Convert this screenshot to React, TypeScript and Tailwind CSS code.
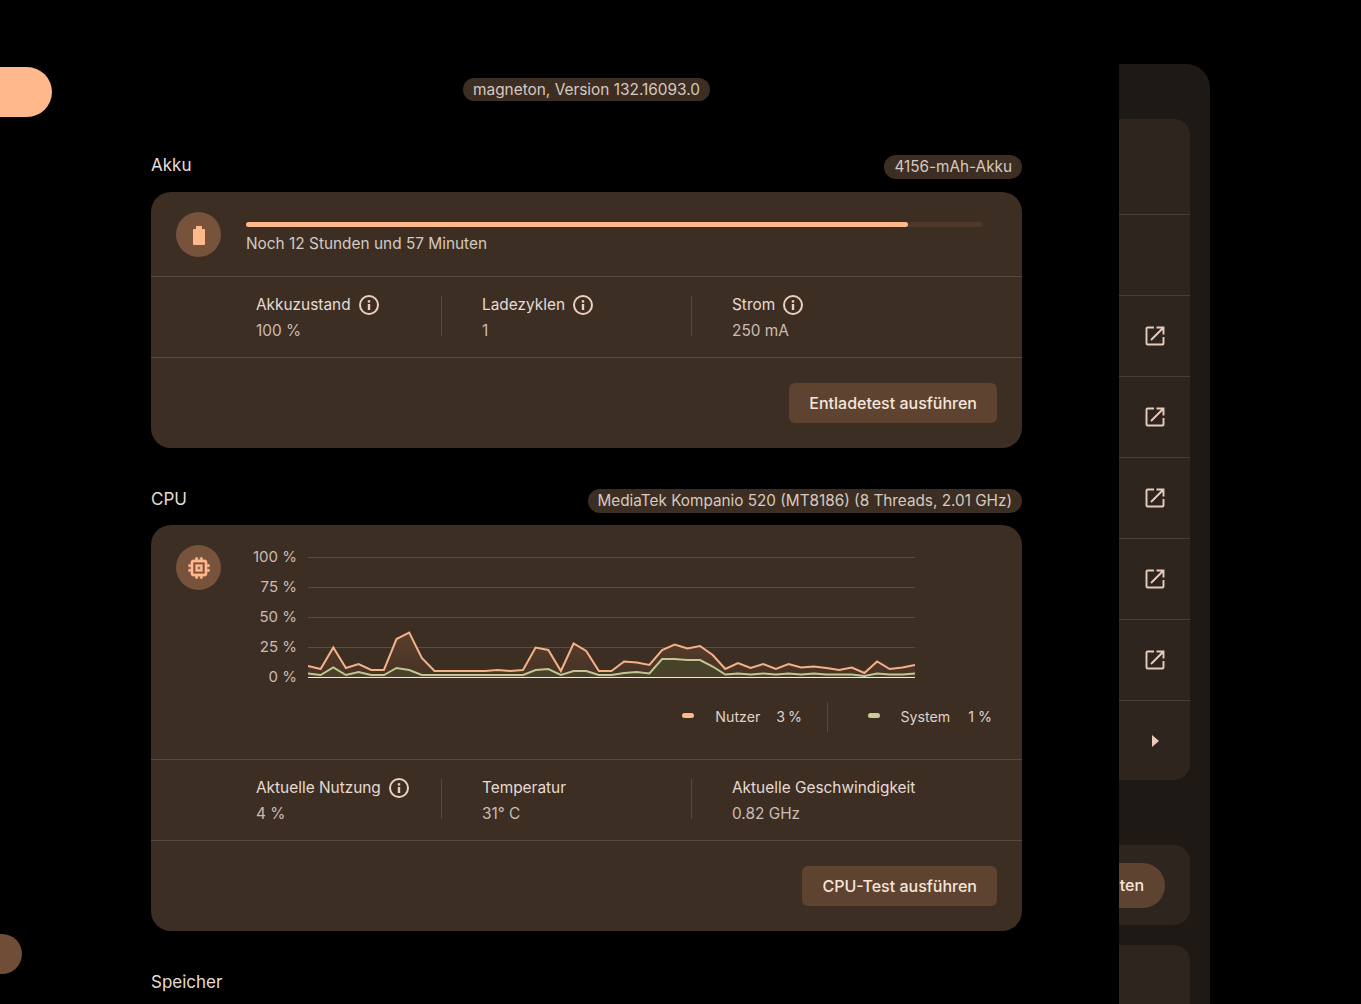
const userLoad = [
  666, 669, 647.5, 668, 664, 670, 670, 639, 632.5, 658, 671, 671, 671, 671, 671, 670, 671, 670, 647.5,
  650, 671, 643.5, 651, 671, 671, 661.5, 662.5, 665, 650, 644.5, 648.5, 646, 655, 669, 663, 668, 664, 669,
  664, 667.5, 666.5, 668, 670, 667.5, 673, 661.5, 669, 667.5, 665,
];
const systemLoad = [
  673.5, 675, 667.5, 675, 672, 675, 675, 668, 670, 675, 675, 675, 675, 675, 675, 675, 675, 675, 670,
  669, 675, 671, 671, 675, 675, 673, 672, 673.5, 659, 659, 660, 660, 666.5, 674.5, 673.5, 674.5, 673.5,
  674.5, 673.5, 674.5, 673.5, 674.5, 674.5, 674.5, 676, 673.5, 674.5, 674.5, 673.5,
];

const stepX = 607 / 48;
const toPoints = (values: number[]) =>
  values.map((y, i) => `${(i * stepX).toFixed(1)},${y - 557}`).join(" ");
const toArea = (values: number[]) => `0,120 ${toPoints(values)} 607,120`;

function InfoIcon() {
  return (
    <svg width="22" height="22" viewBox="0 0 22 22" fill="none" className="shrink-0">
      <circle cx="11" cy="11" r="9" stroke="#eccfbc" strokeWidth="2" />
      <rect x="9.8" y="10" width="2.4" height="6" fill="#eccfbc" />
      <rect x="9.8" y="6.2" width="2.4" height="2.4" fill="#eccfbc" />
    </svg>
  );
}

function OpenIcon() {
  return (
    <svg width="22" height="22" viewBox="0 0 22 22" fill="none">
      <path d="M10 2.5H3.5a1 1 0 0 0-1 1v15a1 1 0 0 0 1 1h15a1 1 0 0 0 1-1V12" stroke="#e8ccba" strokeWidth="1.9" />
      <path d="M7 15 18.5 3.5M12.5 2.5h7v7" stroke="#e8ccba" strokeWidth="1.9" />
    </svg>
  );
}

function Stat({ label, value, info, className }: { label: string; value: string; info?: boolean; className: string }) {
  return (
    <div className={className}>
      <div className="-mt-[2px] flex items-center gap-[7px] h-[22px] text-[15.4px] text-[#e6dbd2]">
        {label}
        {info && <InfoIcon />}
      </div>
      <div className="mt-[3px] text-[15.4px] leading-6 text-[#c9bcb2]">{value}</div>
    </div>
  );
}

function StatRow({ stats }: { stats: { label: string; value: string; info?: boolean }[] }) {
  return (
    <div className="flex items-start h-[81px] pt-[19px] pl-[105px] border-t border-[#58493e]">
      <Stat {...stats[0]} className="w-[186px] h-10 border-r border-[#58493e]" />
      <Stat {...stats[1]} className="w-[250px] h-10 pl-10 border-r border-[#58493e]" />
      <Stat {...stats[2]} className="pl-10 h-10" />
    </div>
  );
}

function ActionRow({ label }: { label: string }) {
  return (
    <div className="flex justify-end h-[91px] pt-[25px] pr-[25px] border-t border-[#58493e]">
      <button className="h-10 px-5 rounded-md bg-[#5e4331] text-[16px] font-medium text-[#f6e6da]">{label}</button>
    </div>
  );
}

function Chip({ children }: { children: string }) {
  return (
    <span className="px-2.5 h-[24px] flex items-center rounded-full bg-[#3d2e24] text-[15.3px] text-[#d6c9bf]">
      {children}
    </span>
  );
}

function SectionHeader({ title, chip }: { title: string; chip: string }) {
  return (
    <div className="flex justify-between items-start">
      <h2 className="text-[17px] leading-5 text-[#e6dbd2]">{title}</h2>
      <Chip>{chip}</Chip>
    </div>
  );
}

function IconCircle({ children }: { children: React.ReactNode }) {
  return (
    <div className="w-[45px] h-[45px] shrink-0 rounded-full bg-[#77533c] flex items-center justify-center">
      {children}
    </div>
  );
}

function Legend({ color, name, value, valueClass }: { color: string; name: string; value: string; valueClass: string }) {
  return (
    <div className="flex items-center text-[14.2px] text-[#ddd1c8]">
      <span className={`w-3 h-[5px] rounded-full mr-[21px] -mt-[3px] ${color}`} />
      <span>{name}</span>
      <span className={valueClass}>{value}</span>
    </div>
  );
}

const chartLabels = ["100 %", "75 %", "50 %", "25 %", "0 %"];
const rowCards = [0, 1, 2, 3, 4];

export default function App() {
  return (
    <div className="flex h-[1004px] w-[1361px] overflow-hidden bg-black font-['Inter',sans-serif]">
      <nav className="w-[151px] shrink-0 flex flex-col justify-between pt-[67px] pb-[30px]">
        <div className="w-[52px] h-[50px] rounded-r-full bg-[#ffb88c]" />
        <div className="w-[22px] h-10 rounded-r-full bg-[#6f4d37]" />
      </nav>

      <main className="w-[871px] shrink-0 pt-[78px]">
        <div className="flex justify-center">
          <span className="px-2.5 h-[23px] flex items-center rounded-full bg-[#3d2e24] text-[15.4px] text-[#d6c9bf]">
            magneton, Version 132.16093.0
          </span>
        </div>

        <section className="mt-[54px]">
          <SectionHeader title="Akku" chip="4156-mAh-Akku" />
          <div className="mt-[13px] rounded-[20px] bg-[#3d2e24]">
            <div className="flex h-[84px] pl-[25px] pr-10 pt-5 gap-[25px]">
              <IconCircle>
                <svg width="12" height="19" viewBox="0 0 12 19" fill="#ffb88c" className="mt-0.5">
                  <path d="M3 0h6v3h2a1 1 0 0 1 1 1v14a1 1 0 0 1-1 1H1a1 1 0 0 1-1-1V4a1 1 0 0 1 1-1h2z" />
                </svg>
              </IconCircle>
              <div className="flex-1 pt-2.5">
                <div className="h-[5px] rounded-full bg-[#4e3829]">
                  <div className="h-full w-[90%] rounded-full bg-[#ffb88c]" />
                </div>
                <p className="mt-[5px] text-[15.4px] text-[#d6c9bf]">Noch 12 Stunden und 57 Minuten</p>
              </div>
            </div>
            <StatRow
              stats={[
                { label: "Akkuzustand", value: "100 %", info: true },
                { label: "Ladezyklen", value: "1", info: true },
                { label: "Strom", value: "250 mA", info: true },
              ]}
            />
            <ActionRow label="Entladetest ausführen" />
          </div>
        </section>

        <section className="mt-[41px]">
          <SectionHeader title="CPU" chip="MediaTek Kompanio 520 (MT8186) (8 Threads, 2.01 GHz)" />
          <div className="mt-3 rounded-[20px] bg-[#3d2e24]">
            <div className="h-[234px] pl-[25px] pr-[30px] pt-5">
              <div className="flex gap-[25px]">
                <IconCircle>
                  <svg width="28" height="28" viewBox="0 0 24 24" fill="#ffb88c" stroke="#ffb88c" strokeWidth="0.3">
                    <path d="M15 9H9v6h6V9zm-2 4h-2v-2h2v2zm8-2V9h-2V7c0-1.1-.9-2-2-2h-2V3h-2v2h-2V3H9v2H7c-1.1 0-2 .9-2 2v2H3v2h2v2H3v2h2v2c0 1.1.9 2 2 2h2v2h2v-2h2v2h2v-2h2c1.1 0 2-.9 2-2v-2h2v-2h-2v-2h2zm-4 6H7V7h10v10z" />
                  </svg>
                </IconCircle>
                <div className="flex gap-[11px] -mt-[3px]">
                  <div className="w-[51px] text-right text-[15px] text-[#c9bcb2]">
                    {chartLabels.map((label) => (
                      <div key={label} className="h-[30px] leading-[30px]">{label}</div>
                    ))}
                  </div>
                  <svg width="607" height="122" viewBox="0 0 607 122" className="mt-[15px]">
                    <defs>
                      <linearGradient id="userFill" x1="0" y1="70" x2="0" y2="120" gradientUnits="userSpaceOnUse">
                        <stop offset="0" stopColor="#5d3f2c" />
                        <stop offset="1" stopColor="#463226" />
                      </linearGradient>
                    </defs>
                    {[0, 30, 60, 90].map((y) => (
                      <line key={y} x1="0" x2="607" y1={y + 0.5} y2={y + 0.5} stroke="#5a4c41" />
                    ))}
                    <polygon points={toArea(userLoad)} fill="url(#userFill)" />
                    <polygon points={toArea(systemLoad)} fill="#48422a" />
                    <polyline points={toPoints(userLoad)} fill="none" stroke="#f4b288" strokeWidth="2" />
                    <polyline points={toPoints(systemLoad)} fill="none" stroke="#c1c590" strokeWidth="2" />
                    <line x1="0" x2="607" y1="120.5" y2="120.5" stroke="#f1ecd6" />
                  </svg>
                </div>
              </div>
              <div className="flex justify-end items-center mt-[10px] h-[30px]">
                <Legend color="bg-[#ffb88c]" name="Nutzer" value="3 %" valueClass="ml-[16px] tracking-[-0.5px]" />
                <div className="w-px h-full bg-[#58493e] ml-[25px] mr-10" />
                <Legend color="bg-[#c9cd98]" name="System" value="1 %" valueClass="ml-[18px]" />
              </div>
            </div>
            <StatRow
              stats={[
                { label: "Aktuelle Nutzung", value: "4 %", info: true },
                { label: "Temperatur", value: "31° C" },
                { label: "Aktuelle Geschwindigkeit", value: "0.82 GHz" },
              ]}
            />
            <ActionRow label="CPU-Test ausführen" />
          </div>
        </section>

        <h2 className="mt-[41px] text-[17px] leading-5 text-[#e6dbd2]">Speicher</h2>
      </main>

      <div className="w-[97px] shrink-0" />

      <aside className="mt-16 w-[91px] shrink-0 rounded-tr-[24px] bg-[#1e1915] pr-5 pt-[55px]">
        <div className="rounded-r-[16px] bg-[#2e251e]">
          <div className="h-[95px]" />
          <div className="h-[81px] border-t border-[#4a3f36]" />
          {rowCards.map((row) => (
            <div key={row} className="h-[81px] pl-[25px] flex items-center border-t border-[#4a3f36]">
              <OpenIcon />
            </div>
          ))}
          <div className="h-[80px] pl-[33px] flex items-center border-t border-[#4a3f36]">
            <svg width="7" height="12" viewBox="0 0 7 12" fill="#e8ccba">
              <path d="M0 0l7 6-7 6z" />
            </svg>
          </div>
        </div>
        <div className="mt-[65px] h-[80px] rounded-r-[16px] bg-[#2e251e] flex items-center pr-[25px]">
          <div className="h-[45px] w-full rounded-r-full bg-[#5e4331] overflow-hidden flex items-center justify-end pr-[21px] text-[16px] font-medium text-[#f6e6da]">
            ten
          </div>
        </div>
        <div className="mt-5 h-[80px] rounded-tr-[16px] bg-[#2e251e]" />
      </aside>
    </div>
  );
}
